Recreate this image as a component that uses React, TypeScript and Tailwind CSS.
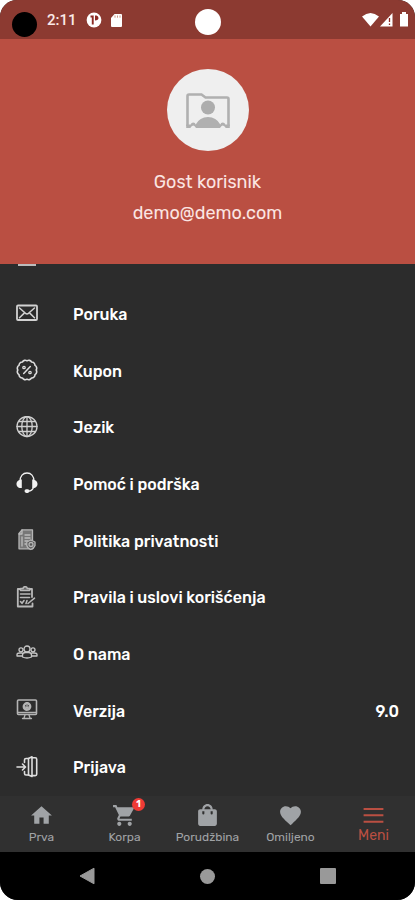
import type { ReactNode } from "react";

type Row = { label: string; icon: ReactNode; value?: string };

const Icon = ({ children, color = "#dedede" }: { children: ReactNode; color?: string }) => (
  <svg
    width="22"
    height="22"
    viewBox="0 0 22 22"
    fill="none"
    stroke={color}
    strokeWidth="1.3"
    strokeLinecap="round"
    strokeLinejoin="round"
    className="relative -top-[1px] shrink-0"
  >
    {children}
  </svg>
);

const scallop = Array.from({ length: 12 }, (_, i) => {
  const a = (i * Math.PI) / 6;
  const b = ((i + 1) * Math.PI) / 6;
  const p = (t: number) => `${(11 + 9.2 * Math.cos(t)).toFixed(2)} ${(11 + 9.2 * Math.sin(t)).toFixed(2)}`;
  return `${i === 0 ? `M${p(a)}` : ""}A3.2 3.2 0 0 1 ${p(b)}`;
}).join("");

const rows: Row[] = [
  {
    label: "Poruka",
    icon: (
      <Icon color="#d2d2d2">
        <rect x="1" y="3.500" width="20" height="14.500" rx="1" strokeWidth="1.800" />
        <path d="M3.500 6l6 5.300q1.500 1.200 3 0l6-5.300M3.500 15.800l4.500-4.400M18.500 15.800l-4.500-4.400" strokeWidth="1.500" />
      </Icon>
    ),
  },
  {
    label: "Kupon",
    icon: (
      <Icon>
        <path d={scallop} strokeWidth="1.600" />
        <path d="M14.300 7.500l-6.600 7" strokeWidth="1.500" />
        <circle cx="8" cy="8.500" r="1.200" />
        <circle cx="14" cy="13.500" r="1.200" />
      </Icon>
    ),
  },
  {
    label: "Jezik",
    icon: (
      <Icon color="#d0d0d0">
        <circle cx="11" cy="10.500" r="10" />
        <ellipse cx="11" cy="10.500" rx="5.200" ry="10" />
        <path d="M11 .5v20M1 10.500h20M2.800 5.500h16.400M2.800 15.500h16.400" />
      </Icon>
    ),
  },
  {
    label: "Pomoć i podrška",
    icon: (
      <Icon color="#f2f2f2">
        <path d="M4 9.500C4 4 7 1 11 1s7 3 7 8.500M17.500 15.500c-1 2.500-2.500 3.500-5 3.500" strokeWidth="1.300" />
        <path d="M5.800 7.500v8.500C2 16.500 .5 14 .5 12s1.500-4.500 5.300-4.500zM16.200 7.500v8.500c3.800.5 5.300-2 5.300-4s-1.500-4.500-5.300-4.500z" fill="#f2f2f2" stroke="none" />
        <rect x="8.500" y="17.300" width="5" height="3.600" rx="1.800" fill="#f2f2f2" stroke="none" />
      </Icon>
    ),
  },
  {
    label: "Politika privatnosti",
    icon: (
      <Icon color="#b5b5b5">
        <path d="M6 .8h10.500v19H3V4.500z" fill="#777" />
        <path d="M6 1v4H3M6 8v9M9 6h5M9 9h5M9 12h3M9 15h2" stroke="#bdbdbd" />
        <path d="M10.800 13l4-2 4.200 2v3.500q-1 3-4.200 4-3.500-1.500-4-4z" fill="#555" />
        <circle cx="15" cy="15.500" r="2" />
      </Icon>
    ),
  },
  {
    label: "Pravila i uslovi korišćenja",
    icon: (
      <Icon color="#b8b8b8">
        <path d="M4 3H1.800v17.500h14.700v-3M14 3h2v8" strokeWidth="1.800" />
        <path d="M4.500 4.500V2.500h2.500C7.500 0 10.800 0 11.300 2.500h2.400v2z" fill="#666" strokeWidth="1.500" />
        <path d="M4.500 8h9.500M4.500 11.500h9M4.500 15.500l1.500 1.800L8 14.500M10 17.500l1-3M12 17.500l6.500-5.300" strokeWidth="1.600" />
      </Icon>
    ),
  },
  {
    label: "O nama",
    icon: (
      <Icon color="#c6c6c6">
        <circle cx="11" cy="7" r="3" />
        <circle cx="5" cy="7.800" r="2" />
        <circle cx="17" cy="7.800" r="2" />
        <path d="M6.500 15V13q0-2.500 3-2.500h3q3 0 3 2.500v2q-4.500 2-9 0zM6 14H1v-1.500Q1 11 4 11h2M16 14h5v-1.500q0-1.500-3-1.500h-2" />
      </Icon>
    ),
  },
  {
    label: "Verzija",
    value: "9.0",
    icon: (
      <Icon color="#b4b4b4">
        <rect x="1.500" y="1" width="19" height="14.500" rx="1" strokeWidth="1.600" />
        <path d="M2 13.500h18" strokeWidth="1.600" />
        <circle cx="11" cy="7.500" r="3.200" strokeWidth="2.400" strokeDasharray="2 .5" />
        <path d="M11 6V9M9.500 8L11 9.500 12.500 8M9 16l-1 3M13 16l1 3M6.500 19.500h9" />
      </Icon>
    ),
  },
  {
    label: "Prijava",
    icon: (
      <Icon>
        <path d="M1 11h8M6.500 8l3 3-3 3M8.500 6.500V4q0-1.500 1.500-1.500h2.500M8.500 15.500v2q0 1.500 1.500 1.500h2.500" strokeWidth="1.600" />
        <path d="M12.500 2.500V19l3.500 1.500V.8zM16 1.800h3.200q1.500 0 1.500 1.500v15q0 1.300-1.500 1.300H16" strokeWidth="1.600" />
      </Icon>
    ),
  },
];

const Glyph = ({ d }: { d: string }) => (
  <svg width="25" height="25" viewBox="0 0 24 24" fill="currentColor">
    <path d={d} />
  </svg>
);

const tabs = [
  { label: "Prva", d: "M10 20v-6h4v6h5v-8h3L12 3 2 12h3v8z" },
  {
    label: "Korpa",
    d: "M7 18c-1.100 0-1.990.9-1.990 2S5.900 22 7 22s2-.9 2-2-.9-2-2-2zM1 2v2h2l3.600 7.590-1.350 2.450c-.16.280-.25.610-.25.960 0 1.100.9 2 2 2h12v-2H7.420c-.14 0-.25-.11-.25-.25l.03-.12.9-1.630h7.450c.75 0 1.410-.41 1.750-1.030l3.580-6.490A1 1 0 0 0 20 4H5.210l-.94-2H1zm16 16c-1.100 0-1.990.9-1.990 2s.89 2 1.990 2 2-.9 2-2-.9-2-2-2z",
  },
  {
    label: "Porudžbina",
    d: "M19 6h-2c0-2.760-2.240-5-5-5S7 3.240 7 6H5c-1.100 0-2 .9-2 2v12c0 1.100.9 2 2 2h14c1.100 0 2-.9 2-2V8c0-1.100-.9-2-2-2zM9 6c0-1.660 1.340-3 3-3s3 1.340 3 3H9zm0 4a1 1 0 0 1-2 0V8h2v2zm8 0a1 1 0 0 1-2 0V8h2v2z",
  },
  {
    label: "Omiljeno",
    d: "M12 21.350l-1.450-1.320C5.400 15.360 2 12.280 2 8.500 2 5.420 4.420 3 7.500 3c1.740 0 3.410.81 4.500 2.090C13.090 3.810 14.760 3 16.500 3 19.580 3 22 5.420 22 8.500c0 3.780-3.400 6.860-8.550 11.540L12 21.350z",
  },
  { label: "Meni", d: "M2.500 19h19v-1.900h-19V19zm0-6.200h19v-1.900h-19v1.900zM2.500 4.700v1.900h19V4.700h-19z", active: true },
];

export default function App() {
  return (
    <div className="h-[900px] w-[415px] bg-white">
      <div className="flex h-full flex-col overflow-hidden rounded-t-[17px] rounded-b-[18px] bg-[#2c2c2c] font-['Rubik','Roboto',sans-serif] text-white">
        <div className="relative flex h-[39px] shrink-0 items-center bg-[#8c3a31]">
          <div className="mt-[9px] ml-3 size-[25px] rounded-full bg-black" />
          <span className="mt-[2px] ml-[10px] w-[28px] font-['Roboto',sans-serif] text-[15px] font-medium whitespace-nowrap text-[#fbe9e7]">
            2:11
          </span>
          <svg className="mt-[1px] ml-[11px]" width="16" height="16" viewBox="0 0 16 16">
            <circle cx="8" cy="8" r="7.400" fill="#fff" />
            <path d="M4.500 3.500h3.200v9H5.800V5.500H4.500zM9 3.500h1.500q2 .5 2 2.500T9 8.500z" fill="#8c2a24" />
          </svg>
          <svg className="mt-[1px] ml-[8px]" width="13" height="15" viewBox="0 0 13 15">
            <path d="M4.500 1H11q1 0 1 1v11q0 1-1 1H2q-1 0-1-1V5z" fill="#fff" />
            <path d="M5 2.500v2.200M7.500 2.500v2.200M10 2.500v2.200" stroke="#c98" />
          </svg>
          <div className="absolute top-[9px] left-[195px] size-[26px] rounded-full bg-white" />
          <svg className="mt-[1px] mr-[6px] ml-auto" width="47" height="16" viewBox="0 0 47 16">
            <path d="M0 4.500Q8.500-2.500 17 4.500L8.500 14.500z" fill="#fff" />
            <path d="M18 14.500L30.500 1v13.500z" fill="#fff" />
            <path d="M27.500 6v4M27.500 11.500v1.500" stroke="#8c2a24" strokeWidth="1.300" />
            <path d="M40 0h4v2h2v12.500h-8V2h2z" fill="#fff" />
          </svg>
        </div>

        <header className="flex h-[225px] shrink-0 flex-col items-center bg-[#ba4f42]">
          <div className="mt-[30px] flex size-[82px] items-center justify-center rounded-full bg-[#efefef]">
            <svg width="46" height="38" viewBox="0 0 46 38" className="mt-[2px]">
              <path d="M2.500 34V4Q2.500 2.500 4 2.500h12.500l4 3H42q1.500 0 1.500 1.500V34" fill="none" stroke="#b0b0b0" strokeWidth="2.600" />
              <circle cx="23" cy="15.500" r="7" fill="#adadad" />
              <path d="M1.200 32.500h4.500q.5-2 2.500-2t2.500 2q4-7.500 12.300-7.500t12.300 7.500q.5-2 2.500-2t2.500 2h4.500V36h-4q-1.500-2.500-3-2.500T35 36H11q-1.300-2.500-2.800-2.500T5.300 36H1.200z" fill="#b0b0b0" />
            </svg>
          </div>
          <div className="mt-[20px] text-[18px] leading-[22px] text-[#fbe5e2]">Gost korisnik</div>
          <div className="mt-[9px] text-[18px] leading-[22px] text-[#fbe5e2]">demo@demo.com</div>
        </header>

        <main className="flex min-h-0 flex-1 flex-col">
          <div className="h-[22px] shrink-0">
            <div className="ml-[18px] h-[2px] w-[18px] bg-[#bcbcbc]" />
          </div>
          {rows.map((r) => (
            <div key={r.label} className="flex min-h-0 flex-1 items-center px-4">
              {r.icon}
              <span className="mt-px ml-[35px] text-base font-medium whitespace-nowrap">{r.label}</span>
              {r.value && <span className="mt-px ml-auto text-base font-medium">{r.value}</span>}
            </div>
          ))}
        </main>

        <nav className="grid h-[56px] shrink-0 grid-cols-5 bg-[#303030]">
          {tabs.map((t) => (
            <div key={t.label} className={`flex flex-col items-center pt-[7px] ${t.active ? "text-[#ba4f42]" : "text-[#a0a3a6]"}`}>
              <div className="relative">
                <Glyph d={t.d} />
                {t.label === "Korpa" && (
                  <div className="absolute -top-[5px] left-[20px] flex size-[13px] items-center justify-center rounded-full bg-[#ef3b36] text-[9px] font-bold text-white">
                    1
                  </div>
                )}
              </div>
              <span className={t.active ? "text-[14px] leading-[16px]" : "mt-[1px] text-[12px] leading-[16px]"}>{t.label}</span>
            </div>
          ))}
        </nav>

        <div className="grid h-[48px] shrink-0 grid-cols-[175px_65px_175px] place-items-center bg-black">
          <svg width="17" height="18" viewBox="0 0 17 18">
            <path d="M1 9L15 1.200v15.600z" fill="#999" stroke="#999" strokeLinejoin="round" />
          </svg>
          <div className="size-[15px] rounded-full bg-[#999]" />
          <div className="size-[16px] rounded-[1px] bg-[#999]" />
        </div>
      </div>
    </div>
  );
}
